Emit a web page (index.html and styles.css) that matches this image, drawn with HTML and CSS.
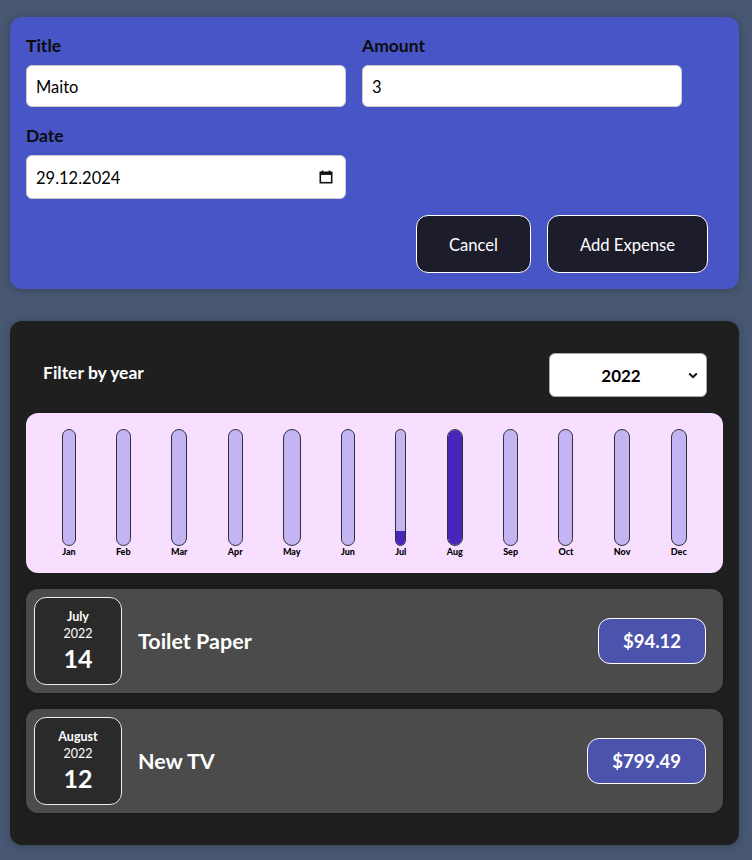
FILE: index.html
```html
<!DOCTYPE html>
<html>
<head>
<meta charset="utf-8">
<link rel="stylesheet" href="styles.css">
</head>
<body>
<div class="app">
  <div class="card new-expense">
    <form>
      <div class="controls">
        <div class="control">
          <label>Title</label>
          <input type="text" value="Maito">
        </div>
        <div class="control">
          <label>Amount</label>
          <input type="text" value="3">
        </div>
        <div class="control">
          <label>Date</label>
          <div class="date-wrap">
            <input type="text" class="date-input" value="29.12.2024">
            <svg class="cal-icon" width="14" height="14" viewBox="0 0 14 14"><path d="M3.5 0.5v2M10.5 0.5v2" stroke="#111" stroke-width="1.6"/><rect x="1.3" y="2.3" width="11.4" height="10.4" fill="none" stroke="#111" stroke-width="1.6"/><rect x="1.3" y="2.3" width="11.4" height="2.6" fill="#111"/></svg>
          </div>
        </div>
      </div>
      <div class="actions">
        <button type="button">Cancel</button>
        <button type="button">Add Expense</button>
      </div>
    </form>
  </div>

  <div class="card expenses">
    <div class="filter">
      <div class="filter-control">
        <label>Filter by year</label>
        <div class="select">
          <span>2022</span>
          <svg class="chev" width="10" height="7" viewBox="0 0 10 7"><path d="M1.2 1.5L5 5.2L8.8 1.5" fill="none" stroke="#111" stroke-width="2"/></svg>
        </div>
      </div>
    </div>
    <div class="chart">
      <div class="bar"><div class="bar-inner"><div class="bar-fill" style="height:0%"></div></div><div class="bar-label">Jan</div></div>
      <div class="bar"><div class="bar-inner"><div class="bar-fill" style="height:0%"></div></div><div class="bar-label">Feb</div></div>
      <div class="bar"><div class="bar-inner"><div class="bar-fill" style="height:0%"></div></div><div class="bar-label">Mar</div></div>
      <div class="bar"><div class="bar-inner"><div class="bar-fill" style="height:0%"></div></div><div class="bar-label">Apr</div></div>
      <div class="bar"><div class="bar-inner"><div class="bar-fill" style="height:0%"></div></div><div class="bar-label">May</div></div>
      <div class="bar"><div class="bar-inner"><div class="bar-fill" style="height:0%"></div></div><div class="bar-label">Jun</div></div>
      <div class="bar"><div class="bar-inner"><div class="bar-fill" style="height:12%"></div></div><div class="bar-label">Jul</div></div>
      <div class="bar"><div class="bar-inner"><div class="bar-fill" style="height:100%"></div></div><div class="bar-label">Aug</div></div>
      <div class="bar"><div class="bar-inner"><div class="bar-fill" style="height:0%"></div></div><div class="bar-label">Sep</div></div>
      <div class="bar"><div class="bar-inner"><div class="bar-fill" style="height:0%"></div></div><div class="bar-label">Oct</div></div>
      <div class="bar"><div class="bar-inner"><div class="bar-fill" style="height:0%"></div></div><div class="bar-label">Nov</div></div>
      <div class="bar"><div class="bar-inner"><div class="bar-fill" style="height:0%"></div></div><div class="bar-label">Dec</div></div>
    </div>
    <ul class="list">
      <li class="item">
        <div class="date">
          <div class="month">July</div>
          <div class="year">2022</div>
          <div class="day">14</div>
        </div>
        <div class="desc">
          <h2>Toilet Paper</h2>
          <div class="price">$94.12</div>
        </div>
      </li>
      <li class="item">
        <div class="date">
          <div class="month">August</div>
          <div class="year">2022</div>
          <div class="day">12</div>
        </div>
        <div class="desc">
          <h2>New TV</h2>
          <div class="price">$799.49</div>
        </div>
      </li>
    </ul>
  </div>
</div>
</body>
</html>
```

FILE: styles.css
```css
* { box-sizing: border-box; }

body {
  margin: 0;
  background: #485872;
  font-family: "Lato", "Liberation Sans", sans-serif;
}

.app {
  padding: 17px 0 15px 10px;
}

.card {
  width: 729px;
  border-radius: 12px;
  padding: 16px;
  box-shadow: 0 1px 8px rgba(0, 0, 0, 0.25);
}

.new-expense {
  background: #4855c7;
  margin-bottom: 32px;
}

.controls {
  display: flex;
  flex-wrap: wrap;
  gap: 16px;
  margin-bottom: 16px;
}

.control {
  width: 320px;
}

.control label {
  display: block;
  font-weight: bold;
  font-size: 17.5px;
  line-height: 23px;
  padding-top: 1px;
  margin-bottom: 8px;
  color: #0c0c0c;
}

.control input {
  display: block;
  width: 320px;
  height: 42px;
  font: inherit;
  font-size: 16.5px;
  padding: 9px 9px 7px;
  border: 1px solid #ccc;
  border-radius: 6px;
  background: #fff;
  color: #000;
  outline: none;
}

.date-wrap {
  position: relative;
}

.date-wrap .date-input {
  height: 44px;
}

.cal-icon {
  position: absolute;
  right: 13px;
  top: 15px;
}

.actions {
  display: flex;
  justify-content: flex-end;
  gap: 16px;
  padding-right: 15px;
}

.actions button {
  font: inherit;
  font-size: 16.6px;
  line-height: 23px;
  padding: 18px 32px 15px;
  border: 1px solid #fff;
  border-radius: 12px;
  background: #1d1c2b;
  color: #fff;
  cursor: pointer;
}

.expenses {
  background: #1f1f1f;
}

.filter {
  color: #fff;
  padding: 0 16px;
}

.filter-control {
  display: flex;
  align-items: center;
  justify-content: space-between;
  margin: 16px 0;
}

.filter-control label {
  font-weight: bold;
  font-size: 17.5px;
  padding-left: 1px;
  margin-top: -6px;
}

.select {
  position: relative;
  width: 158px;
  height: 44px;
  background: #fff;
  border: 1px solid #aaa;
  border-radius: 6px;
  color: #000;
  font-weight: bold;
  font-size: 17px;
  display: flex;
  align-items: center;
  justify-content: center;
  padding-right: 14px;
}

.chev {
  position: absolute;
  right: 8px;
  top: 18px;
}

.chart {
  height: 160px;
  padding: 16px;
  border-radius: 12px;
  background: #f8dfff;
  display: flex;
  justify-content: space-around;
}

.bar {
  height: 100%;
  display: flex;
  flex-direction: column;
  align-items: center;
}

.bar-inner {
  flex: 1;
  width: 100%;
  border: 1px solid #313131;
  border-radius: 12px;
  background: #c3b4f3;
  overflow: hidden;
  display: flex;
  flex-direction: column;
  justify-content: flex-end;
}

.bar-fill {
  background: #4826b9;
  width: 100%;
}

.bar-label {
  font-weight: 900;
  font-size: 9px;
  line-height: 11px;
  text-align: center;
  color: #000;
}

.list {
  list-style: none;
  margin: 0;
  padding: 0;
}

.item {
  display: flex;
  align-items: center;
  padding: 8px;
  margin: 16px 0;
  border-radius: 12px;
  background: #4b4b4b;
  box-shadow: 0 1px 8px rgba(0, 0, 0, 0.25);
}

.date {
  width: 88px;
  height: 88px;
  border: 1px solid #ececec;
  border-radius: 12px;
  background: #2a2a2a;
  color: #fff;
  display: flex;
  flex-direction: column;
  align-items: center;
  justify-content: center;
}

.month {
  font-size: 12.5px;
  font-weight: bold;
  line-height: 17px;
}

.year {
  font-size: 12.5px;
  line-height: 17px;
}

.day {
  font-size: 25px;
  font-weight: bold;
  line-height: 32px;
}

.desc {
  flex: 1;
  display: flex;
  align-items: center;
}

.desc h2 {
  flex: 1;
  margin: 0 16px;
  font-size: 21.5px;
  color: #fff;
}

.price {
  font-size: 18.5px;
  font-weight: bold;
  line-height: 28px;
  color: #fff;
  background: #4c53ad;
  border: 1px solid #fff;
  border-radius: 12px;
  padding: 8px 24px;
  margin-right: 9px;
}
```
